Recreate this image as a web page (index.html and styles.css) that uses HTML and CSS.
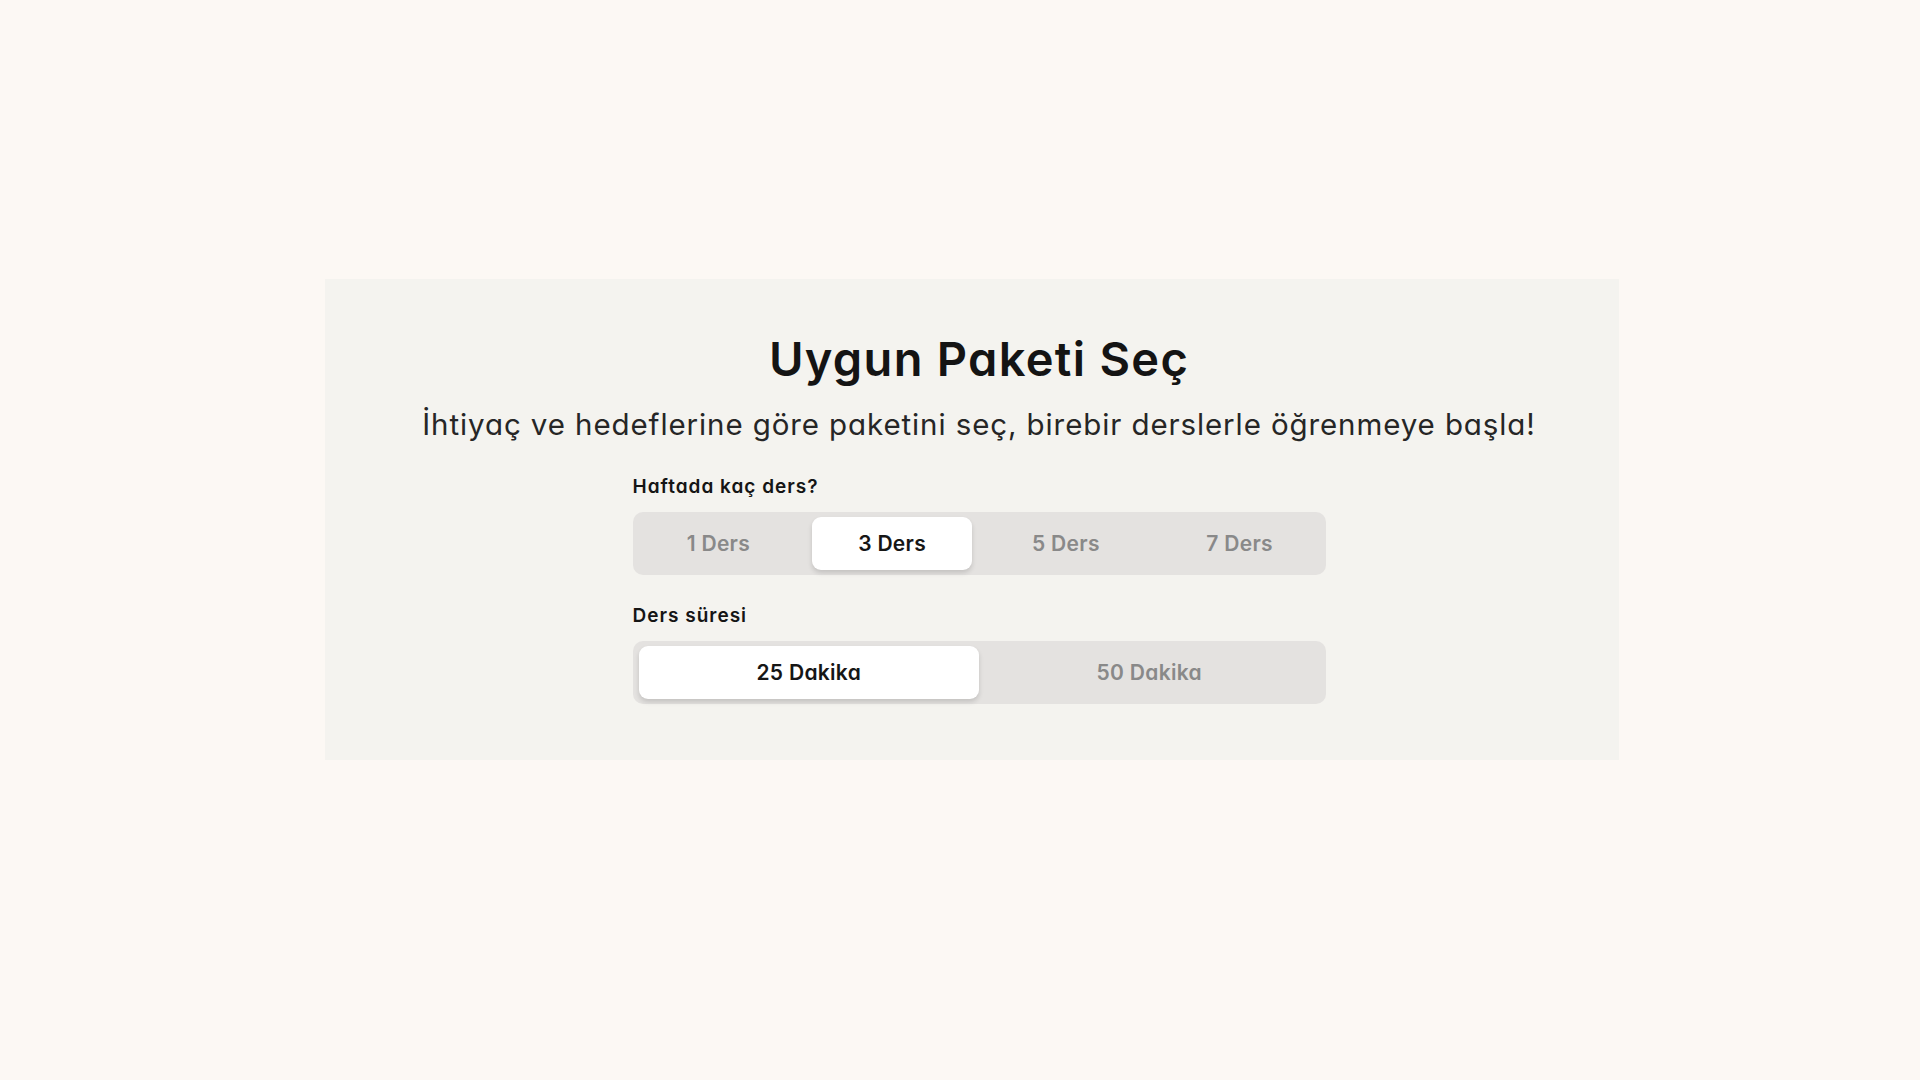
FILE: index.html
```html
<!DOCTYPE html>
<html lang="tr">
<head>
    <meta charset="UTF-8">
    <title>Uygun Paketi Seç</title>
    <link rel="stylesheet" href="styles.css">
</head>
<body>
    <div class="page">
        <section class="packages">
            <h1>Uygun Paketi Seç</h1>
            <p class="lead">İhtiyaç ve hedeflerine göre paketini seç, birebir derslerle öğrenmeye başla!</p>

            <div class="picker">
                <div class="group">
                    <div class="group-label">Haftada kaç ders?</div>
                    <div class="segments four">
                        <button class="seg">1 Ders</button>
                        <button class="seg active">3 Ders</button>
                        <button class="seg">5 Ders</button>
                        <button class="seg">7 Ders</button>
                    </div>
                </div>

                <div class="group">
                    <div class="group-label">Ders süresi</div>
                    <div class="segments two">
                        <button class="seg active">25 Dakika</button>
                        <button class="seg">50 Dakika</button>
                    </div>
                </div>
            </div>
        </section>
    </div>

    <script>
        // aktif segmenti değiştir
        document.querySelectorAll('.segments').forEach(function (bar) {
            bar.addEventListener('click', function (e) {
                const btn = e.target.closest('.seg');
                if (!btn) return;
                bar.querySelectorAll('.seg').forEach(b => b.classList.remove('active'));
                btn.classList.add('active');
            });
        });
    </script>
</body>
</html>
```

FILE: styles.css
```css
body {
    margin: 0;
    background-color: #fcf8f4;
    font-family: Inter, 'Noto Sans', sans-serif;
    font-feature-settings: "cv11" 1;
    color: #151515;
}
.page {
    padding: 279px 301px 0 325px;
}
.packages {
    background-color: #f4f3ef;
    padding: 52px 40px 56px 54px;
    text-align: center;
}
h1 {
    margin: 0;
    font-size: 47px;
    line-height: 56px;
    font-weight: 600;
    letter-spacing: 1.3px;
    color: #141414;
}
.lead {
    margin: 19px 0 0;
    font-size: 29.5px;
    line-height: 36px;
    font-weight: 400;
    letter-spacing: 0.9px;
    color: #262626;
}
.picker {
    width: 693px;
    margin: 33px auto 0;
    text-align: left;
}
.group + .group {
    margin-top: 29px;
}
.group-label {
    font-size: 19px;
    line-height: 24px;
    font-weight: 600;
    letter-spacing: 1px;
    color: #151515;
    margin-bottom: 13px;
}
.segments {
    display: flex;
    background-color: #e4e2e0;
    border-radius: 10px;
    padding: 5px 6px;
}
.segments.four {
    gap: 14px;
}
.seg {
    flex: 1;
    height: 53px;
    border: none;
    border-radius: 9px;
    background: transparent;
    font-family: inherit;
    font-feature-settings: inherit;
    font-size: 21px;
    font-weight: 600;
    letter-spacing: 0.3px;
    color: #898989;
    cursor: pointer;
}
.seg.active {
    background-color: #ffffff;
    color: #161616;
    box-shadow: 0 3px 5px rgba(0, 0, 0, 0.14);
}
```
